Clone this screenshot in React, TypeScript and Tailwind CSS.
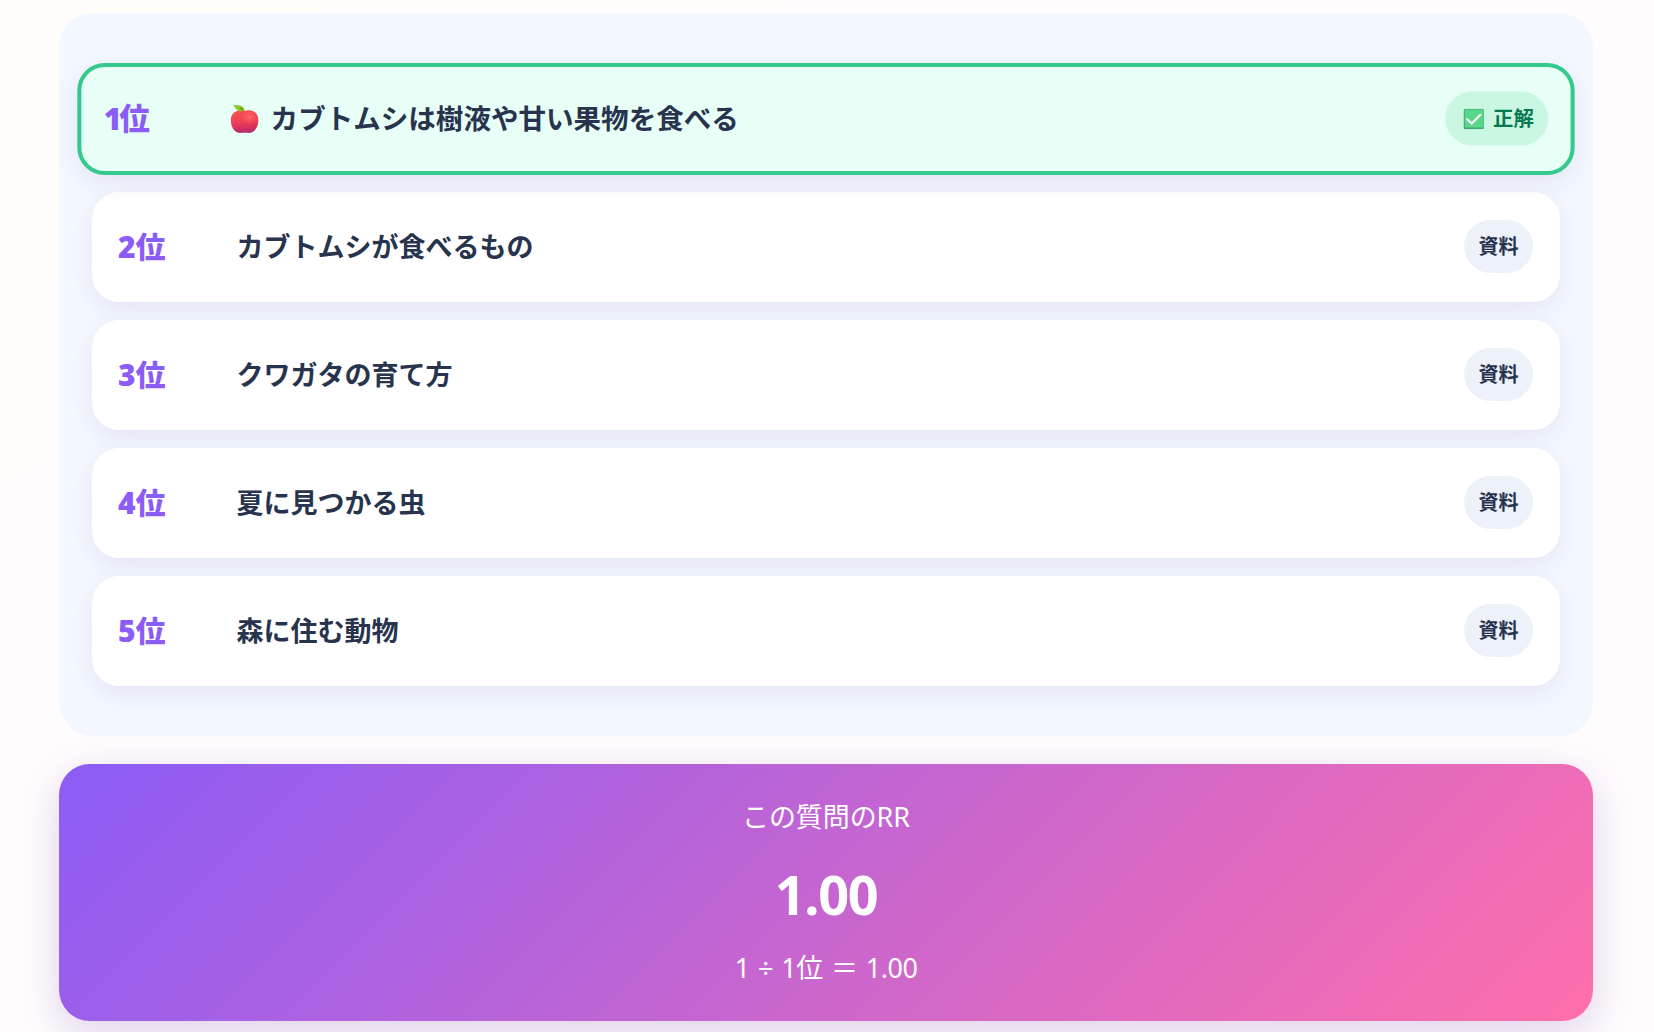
const rows = [
  { rank: 1, title: 'カブトムシは樹液や甘い果物を食べる', hit: true },
  { rank: 2, title: 'カブトムシが食べるもの', hit: false },
  { rank: 3, title: 'クワガタの育て方', hit: false },
  { rank: 4, title: '夏に見つかる虫', hit: false },
  { rank: 5, title: '森に住む動物', hit: false },
];

function Apple() {
  return (
    <svg className="ml-[5px] mr-[12px] h-[28px] w-[28px] shrink-0" viewBox="0 0 28 28">
      <defs>
        <linearGradient id="apple" x1="0.4" y1="0" x2="0.5" y2="1">
          <stop offset="0" stopColor="#f6534f" />
          <stop offset="0.5" stopColor="#ee3f55" />
          <stop offset="0.8" stopColor="#d3305f" />
          <stop offset="1" stopColor="#ae2c78" />
        </linearGradient>
        <radialGradient id="shine" cx="0.68" cy="0.32" r="0.3">
          <stop offset="0" stopColor="#fb6560" />
          <stop offset="1" stopColor="#fb6560" stopOpacity="0" />
        </radialGradient>
      </defs>
      <path d="M8 5.600c2.500-.6 4.200.4 6 .4s3.500-1 6.200-.4C24.800 6.500 27.500 10 27.500 15c0 6-2.600 10.500-6.500 12.200-1.800.8-4 .2-7 .2s-5.200.6-7-.2C3.100 25.500.5 21 .5 15 .5 10 3.700 6.500 8 5.600Z" fill="url(#apple)" />
      <path d="M8 5.600c2.500-.6 4.200.4 6 .4s3.500-1 6.200-.4C24.800 6.500 27.500 10 27.500 15c0 6-2.600 10.500-6.500 12.200-1.800.8-4 .2-7 .2s-5.200.6-7-.2C3.100 25.500.5 21 .5 15 .5 10 3.700 6.500 8 5.600Z" fill="url(#shine)" />
      <path d="M2.600.5C8 .2 13.500.2 14 6c-4.500.6-7.700.2-9-2.700C4.400 2 3.600 1.400 2.600.5Z" fill="#8bc926" />
      <path d="M9 2.500c2.500.3 4.500 1.200 5 3.500-2.800 0-4.200-1-5-3.500Z" fill="#6da51d" />
    </svg>
  );
}

function Check() {
  return (
    <svg className="ml-[4px] mr-[9.500px] h-[20px] w-[20px] shrink-0" viewBox="0 0 20 20">
      <rect width="20" height="20" rx="1.500" fill="#3fa870" />
      <rect x="1.200" y="0.700" width="18.300" height="17.600" rx="1.200" fill="#5ad68c" />
      <path d="M3.600 10.200 8 14.500 16.500 5.800" fill="none" stroke="#fff" strokeWidth="2" strokeLinecap="round" strokeLinejoin="round" />
    </svg>
  );
}

export default function App() {
  return (
    <div className="h-[1032px] overflow-hidden bg-[#fefcfc] bg-linear-to-br from-[#fffdf9] via-[#fffcfd] via-30% to-[#fffcfd] px-[59px] pt-[13px] pr-[61px] font-['Noto_Sans','Noto_Sans_CJK_JP',sans-serif] text-[#28344e]">
      <section className="flex h-[723px] flex-col gap-[18px] rounded-[34px] bg-[#f3f7ff] px-[33px] pt-[51px]">
        {rows.map((r) => (
          <div
            key={r.rank}
            className={
              'flex h-[110px] shrink-0 items-center rounded-[27px] border-4 px-[23px] shadow-[0_8px_24px_rgba(60,50,130,0.08)] ' +
              (r.hit ? 'scale-[1.02] border-[#36c98e] bg-[#e8fff7]' : 'border-white bg-white')
            }
          >
            <div
              className={
                "-ml-px w-[118.5px] shrink-0 font-['Open_Sans','Noto_Sans_CJK_JP',sans-serif] text-[30px] leading-[40px] font-extrabold text-[#8b5cf6] " +
                (r.hit ? 'tracking-[-2.500px]' : 'tracking-normal')
              }
            >
              {r.rank}
              <span className="tracking-normal">位</span>
            </div>
            <div className="flex flex-1 items-center text-[27px] leading-[40px] font-semibold">
              {r.hit && <Apple />}
              <span>{r.title}</span>
            </div>
            <div
              className={
                '-mt-px flex h-[53px] items-center rounded-[27px] text-[20px] leading-[30px] font-bold ' +
                (r.hit ? '-mr-px bg-[#c9f7e1] px-[14px] text-[#08784f]' : 'bg-[#edf1f9] px-[14.5px]')
              }
            >
              {r.hit && <Check />}
              {r.hit ? '正解' : '資料'}
            </div>
          </div>
        ))}
      </section>
      <section className="mt-[28px] flex h-[257px] flex-col items-center rounded-[31px] bg-[linear-gradient(135deg,#8b5cf6,#ff6fab)] text-white shadow-[0_12px_42px_rgba(90,40,160,0.2)]">
        <p className="mt-[33px] text-[27px] leading-[40px] tracking-[-0.1px]">この質問のRR</p>
        <p className="mt-[17px] text-[54px] leading-[80px] font-bold tracking-[-1.300px]">1.00</p>
        <p className="mt-[14px] text-[27px] leading-[40px] tracking-[-0.500px] [word-spacing:1.800px]">1 ÷ 1位 ＝ 1.00</p>
      </section>
    </div>
  );
}
